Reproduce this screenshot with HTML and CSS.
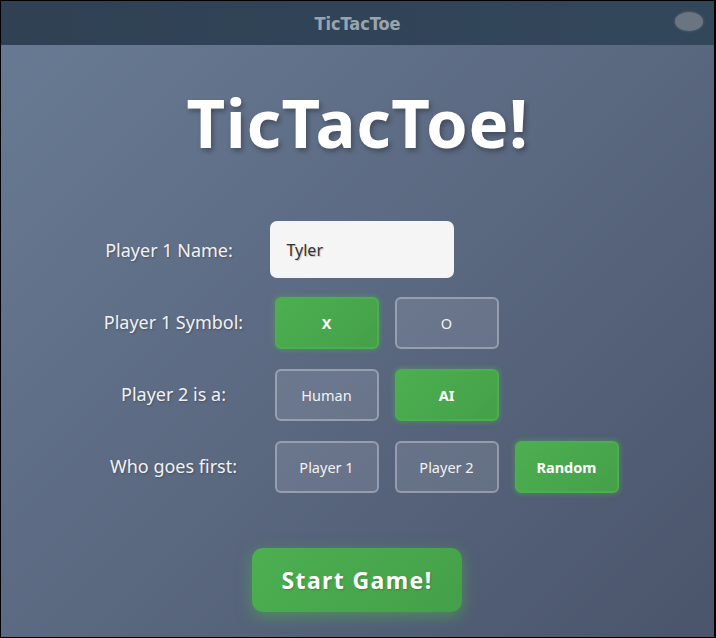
FILE: index.html
```html
<!DOCTYPE html>
<html>
<head>
<meta charset="utf-8">
<link rel="stylesheet" href="styles.css">
</head>
<body>
<div class="window">
  <header class="titlebar">
    <span class="titlebar-text">TicTacToe</span>
    <span class="titlebar-dot"></span>
  </header>
  <main class="content">
    <h1 class="title">TicTacToe!</h1>
    <div class="form">
      <div class="label label-name">Player 1 Name:</div>
      <div class="field"><div class="input">Tyler</div></div>

      <div class="label">Player 1 Symbol:</div>
      <div class="options">
        <button class="opt selected">X</button>
        <button class="opt">O</button>
      </div>

      <div class="label">Player 2 is a:</div>
      <div class="options">
        <button class="opt">Human</button>
        <button class="opt selected">AI</button>
      </div>

      <div class="label">Who goes first:</div>
      <div class="options">
        <button class="opt">Player 1</button>
        <button class="opt">Player 2</button>
        <button class="opt selected">Random</button>
      </div>
    </div>
    <button class="start">Start Game!</button>
  </main>
</div>
</body>
</html>
```
FILE: styles.css
```css
html, body {
  margin: 0;
  padding: 0;
  background: #000;
}
.window {
  box-sizing: border-box;
  width: 716px;
  height: 638px;
  border: 1px solid #000;
  border-right-width: 2px;
  display: flex;
  flex-direction: column;
  overflow: hidden;
  font-family: "Noto Sans", "Open Sans", sans-serif;
}
.titlebar {
  height: 44px;
  flex: none;
  background: linear-gradient(90deg, #2f4153, #33475b);
  position: relative;
  display: flex;
  align-items: center;
  justify-content: center;
}
.titlebar-text {
  font-family: "DejaVu Sans", sans-serif;
  font-stretch: condensed;
  font-weight: bold;
  font-size: 18px;
  color: #9aa4b0;
  margin-top: 1px;
}
.titlebar-dot {
  position: absolute;
  right: 11px;
  top: 11px;
  width: 28px;
  height: 19px;
  border-radius: 50%;
  background: #6b7582;
  box-shadow: 0 0 3px rgba(120,130,140,0.6);
}
.content {
  flex: 1;
  background: linear-gradient(135deg, #687a93 0%, #5a6880 50%, #4a556b 100%);
  display: flex;
  flex-direction: column;
  align-items: center;
}
.title {
  margin: 42px 0 0;
  font-size: 67px;
  font-weight: bold;
  color: #fff;
  line-height: 70px;
  letter-spacing: 0.6px;
  text-shadow: 2px 3px 5px rgba(0,0,0,0.3);
}
.form {
  margin-top: 64px;
  display: grid;
  grid-template-columns: 168px 355px;
  column-gap: 12px;
  grid-auto-rows: 57px;
  row-gap: 15px;
  align-items: center;
  margin-left: -1px;
}
.label {
  display: flex;
  align-items: center;
  justify-content: center;
  height: 57px;
  color: #f2f2f2;
  font-size: 18px;
  text-shadow: 1px 1px 2px rgba(0,0,0,0.25);
}
.label-name {
  padding-right: 9px;
}
.input {
  box-sizing: border-box;
  width: 184px;
  height: 57px;
  background: #f5f5f5;
  border-radius: 7px;
  padding-left: 17px;
  display: flex;
  align-items: center;
  font-size: 16px;
  color: #333;
  text-shadow: 1px 1px 1px rgba(0,0,0,0.2);
}
.options {
  box-sizing: border-box;
  display: flex;
  gap: 16px;
  padding-left: 5px;
  padding-top: 3px;
  align-items: center;
  height: 57px;
}
.opt {
  box-sizing: border-box;
  width: 104px;
  height: 52px;
  border: 2px solid rgba(255,255,255,0.3);
  background: rgba(255,255,255,0.1);
  border-radius: 6px;
  color: #f2f2f2;
  font-family: "Noto Sans", "Open Sans", sans-serif;
  font-size: 14.5px;
  padding: 0;
}
.opt.selected {
  background: linear-gradient(135deg, #4caf50, #45a049);
  border-color: #4cae50;
  font-weight: bold;
  color: #fff;
  box-shadow: 0 0 4px 2px rgba(76,175,80,0.35);
}
.start {
  margin-top: 54px;
  margin-left: -1px;
  width: 210px;
  height: 64px;
  border: none;
  border-radius: 11px;
  background: linear-gradient(135deg, #4caf50, #45a049);
  color: #fff;
  font-family: "Noto Sans", "Open Sans", sans-serif;
  font-weight: bold;
  font-size: 23px;
  letter-spacing: 1.4px;
  box-shadow: 0 4px 15px rgba(76,175,80,0.6);
  text-shadow: 1px 1px 2px rgba(0,0,0,0.2);
}
```
